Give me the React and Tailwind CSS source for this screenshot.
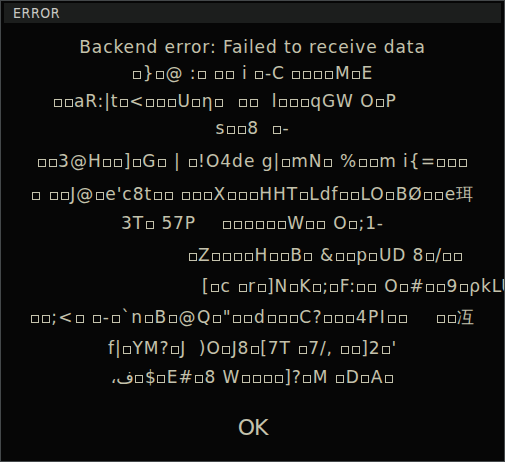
import React from "react";

const Box = () => (
  <span className="inline-block w-[8px] h-[8px] border border-current mx-[1.5px] align-baseline" />
);

const T = ({ s }) => {
  const out = [];
  let buf = "";
  s.split("").forEach((c, i) => {
    if (c === "□") {
      if (buf) out.push(buf);
      buf = "";
      out.push(<Box key={i} />);
    } else buf += c;
  });
  if (buf) out.push(buf);
  return <>{out}</>;
};

const Line = ({ s, h, children }) => (
  <div className={`w-full whitespace-pre ${h}`}>
    {children || <T s={s} />}
  </div>
);

export default function App() {
  return (
    <div className="w-[505px] h-[462px] bg-[#060606] border border-[#44484a] overflow-hidden flex flex-col">
      <div className="mx-[3px] mt-[2px] h-[20px] bg-[#1c1e1d] flex items-center pl-[9px] text-[14px] tracking-[0.6px] text-[#c9c9c4] font-['DejaVu_Sans_Condensed',sans-serif]">
        ERROR
      </div>
      <div className="flex-1 flex flex-col items-center text-[#c4c2ac] text-[17px] tracking-[0.9px] font-['DejaVu_Sans',sans-serif] pt-[11px]">
        <Line s="Backend error: Failed to receive data" h="text-center h-[26px] leading-[26px]" />
        <Line s="□}□@ :□ □□ i □-C □□□□M□E" h="text-center h-[28px] leading-[26px]" />
        <Line s="□□aR:|t□<□□□U□ƞ□  □□  l□□□qGW O□P" h="pl-[51px] h-[27px] leading-[26px]" />
        <Line s="s□□8  □-" h="text-center h-[33px] leading-[26px]" />
        <Line s="□□3@H□□]□G□ | □!O4de g|□mN□ %□□m i{=□□□" h="text-center h-[33px] leading-[26px] tracking-[1px]" />
        <Line s="□ □□J@□e'c8t□□ □□□X□□□HHT□Ldf□□LO□BØ□□e珥" h="text-center h-[29px] leading-[26px] tracking-[1px]" />
        <Line s="3T□ 57P    □□□□□□W□□ O□;1-" h="text-center h-[32px] leading-[26px]" />
        <Line s="□Z□□□□H□□B□ &□□p□UD 8□/□□" h="pl-[186px] h-[31px] leading-[26px]" />
        <Line s="[□c □r□]N□K□;□F:□□ O□#□□9□ρkLU" h="pl-[201px] h-[31px] leading-[26px]" />
        <Line s={"□□;<□ □-□`n□B□@Q□\"□□d□□□C?□□□4PI□□    □□冱"} h="text-center h-[31px] leading-[26px] tracking-[1.4px]" />
        <Line s="f|□YM?□J  )O□J8□[7T □7/, □□]2□'" h="text-center h-[29px] leading-[26px]" />
        <Line h="text-center h-[30px] leading-[26px]">
          <bdo dir="ltr">،ف</bdo>
          <T s="□$□E#□8 W□□□□]?□M □D□A□" />
        </Line>
        <div className="mt-[21px] text-[22px] tracking-[-1px] leading-[26px] text-[#c4c2ac]">OK</div>
      </div>
    </div>
  );
}
